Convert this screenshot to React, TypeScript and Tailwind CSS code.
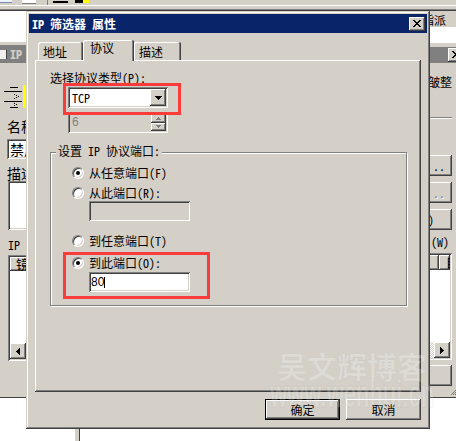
import React from "react";

const raised =
  "shadow-[inset_-1px_-1px_#404040,inset_1px_1px_#ffffff,inset_-2px_-2px_#808080,inset_2px_2px_#d4d0c8]";
const sunken =
  "shadow-[inset_1px_1px_#808080,inset_-1px_-1px_#ffffff,inset_2px_2px_#404040,inset_-2px_-2px_#d4d0c8]";
const frame =
  "shadow-[inset_-1px_-1px_#404040,inset_1px_1px_#d4d0c8,inset_-2px_-2px_#808080,inset_2px_2px_#ffffff]";
const tabEdge = "shadow-[inset_-1px_0_#404040,inset_1px_1px_#ffffff,inset_-2px_0_#808080]";

function CloseX() {
  return (
    <svg width="8" height="7" viewBox="0 0 8 7" shapeRendering="crispEdges" className="block">
      <path
        d="M0 0h2v1H0zM6 0h2v1H6zM1 1h2v1H1zM5 1h2v1H5zM2 2h4v1H2zM3 3h2v1H3zM2 4h4v1H2zM1 5h2v1H1zM5 5h2v1H5zM0 6h2v1H0zM6 6h2v1H6z"
        fill="#000"
      />
    </svg>
  );
}

function ArrowDown({ color = "#000" }: { color?: string }) {
  return (
    <svg width="7" height="4" viewBox="0 0 7 4" shapeRendering="crispEdges" className="block">
      <path d="M0 0h7v1H0zM1 1h5v1H1zM2 2h3v1H2zM3 3h1v1H3z" fill={color} />
    </svg>
  );
}

function SmallArrow({ up }: { up?: boolean }) {
  return (
    <svg width="5" height="3" viewBox="0 0 5 3" shapeRendering="crispEdges" className="block">
      {up ? (
        <path d="M2 0h1v1H2zM1 1h3v1H1zM0 2h5v1H0z" fill="#808080" />
      ) : (
        <path d="M0 0h5v1H0zM1 1h3v1H1zM2 2h1v1H2z" fill="#808080" />
      )}
    </svg>
  );
}

function ArrowLeft() {
  return (
    <svg width="4" height="7" viewBox="0 0 4 7" shapeRendering="crispEdges" className="block">
      <path d="M0 3h1v1H0zM1 2h1v3H1zM2 1h1v5H2zM3 0h1v7H3z" fill="#000" />
    </svg>
  );
}

function ArrowRight() {
  return (
    <svg width="4" height="7" viewBox="0 0 4 7" shapeRendering="crispEdges" className="block">
      <path d="M0 0h1v7H0zM1 1h1v5H1zM2 2h1v3H2zM3 3h1v1H3z" fill="#000" />
    </svg>
  );
}

function Radio({ checked, label, className = "" }: { checked?: boolean; label: string; className?: string }) {
  return (
    <div className={`flex items-center h-[12px] ${className}`}>
      <span className="w-[12px] h-[12px] shrink-0 rounded-full bg-white border border-t-[#808080] border-l-[#808080] border-r-white border-b-white shadow-[inset_1px_1px_0_#404040,inset_-1px_-1px_0_#d4d0c8] flex items-center justify-center">
        {checked && <span className="w-[4px] h-[4px] rounded-full bg-black" />}
      </span>
      <span className="ml-[5px] leading-[12px] whitespace-nowrap">{label}</span>
    </div>
  );
}

function TopStrip() {
  return (
    <div className="h-[11px] flex flex-col bg-[#d4d0c8]">
      <div className="h-[5px] flex items-start">
        <span className="w-[12px] h-[3px] bg-[#eef2fa] border-b border-[#7a8aa8]" />
        <span className="ml-[10px] w-[14px] h-[4px] bg-white border-b border-[#808080]" />
        <span className="ml-[11px] w-px h-[5px] bg-[#808080]" />
        <span className="ml-[5px] mt-[1px] w-[15px] h-[2px] bg-black" />
        <span className="ml-[7px] w-[8px] h-[3px] bg-black" />
        <span className="w-[6px] h-[3px] bg-[#ffff00]" />
      </div>
      <div className="h-px bg-white" />
      <div className="h-[3px]" />
      <div className="h-px bg-[#808080]" />
      <div className="h-px bg-[#404040]" />
    </div>
  );
}

function LeftWindow() {
  return (
    <div className="w-[26px] flex flex-col overflow-hidden">
      <div className="h-[31px] bg-white" />
      <div className="h-[3px] bg-[#d4d0c8]" />
      <div className="h-[18px] bg-[#808080] flex items-center">
        <span className="w-[7px] h-[9px] bg-[#f0f0f0] border-r border-[#404040]" />
        <span className="ml-[3px] font-bold text-[#d4d0c8] leading-[12px]">IP</span>
      </div>
      <div className="h-[334px] bg-[#d4d0c8] flex flex-col items-start">
        <div className="mt-[22px] flex h-[23px]">
          <svg width="19" height="23" viewBox="0 0 19 23" shapeRendering="crispEdges" className="ml-[4px] block">
            <path
              d="M6 2h8v1H6zM0 6h18v1H0zM10 9h1v1h-1zM12 10h1v1h-1zM14 11h1v1h-1zM12 12h1v1h-1zM10 13h1v1h-1zM0 16h18v1H0zM10 18h1v1h-1zM12 19h1v1h-1zM10 20h1v1h-1zM6 22h8v1H6z"
              fill="#000"
            />
          </svg>
          <span className="w-[3px] h-[23px] bg-[#ffff00]" />
        </div>
        <div className="mt-[11px] ml-[7px] text-[14px] leading-[14px] whitespace-nowrap">名称</div>
        <div className={`mt-[6px] ml-[7px] w-[40px] h-[20px] shrink-0 bg-white ${sunken} pl-[3px] text-[14px] leading-[20px] whitespace-nowrap`}>
          禁用
        </div>
        <div className="mt-[7px] ml-[7px] text-[14px] leading-[14px] whitespace-nowrap">描述</div>
        <div className={`mt-[1px] ml-[8px] w-[40px] h-[49px] shrink-0 bg-white ${sunken}`} />
        <div className="mt-[9px] ml-[8px] leading-[12px]">IP</div>
        <div className={`mt-[4px] ml-[8px] w-[40px] h-[106px] shrink-0 bg-white ${sunken} p-[2px] flex flex-col`}>
          <div className={`h-[14px] bg-[#d4d0c8] ${raised} pl-[6px] text-[13px] leading-[14px] whitespace-nowrap`}>镜像</div>
          <div className="flex-1" />
          <div className="h-[16px] flex">
            <span className={`w-[16px] h-[16px] bg-[#d4d0c8] ${raised} flex items-center justify-center`}>
              <ArrowLeft />
            </span>
          </div>
        </div>
      </div>
      <div className="h-px bg-[#404040]" />
      <div className="flex-1 bg-white" />
    </div>
  );
}

function RightWindow() {
  return (
    <div className="w-[26px] flex flex-col overflow-hidden">
      <div className="h-[16px] bg-[#d4d0c8] pt-[3px] -ml-[8px] leading-[12px] whitespace-nowrap">指派</div>
      <div className="h-[16px] bg-white" />
      <div className="h-[4px] bg-[#d4d0c8]" />
      <div className="h-[16px] bg-[#808080] flex items-start">
        <span className={`ml-[18px] mt-[1px] w-[16px] h-[14px] shrink-0 bg-[#d4d0c8] ${raised} pl-[4px] pt-[3px]`}>
          <CloseX />
        </span>
      </div>
      <div className="h-[334px] bg-[#d4d0c8] flex flex-col items-start">
        <div className="mt-[13px] -ml-[2px] leading-[12px] whitespace-nowrap">皱整</div>
        <div className="mt-[29px] w-[22px] h-[2px] border-t border-[#808080] border-b border-b-white" />
        <div className={`mt-[36px] -ml-[10px] w-[32px] h-[21px] shrink-0 bg-[#d4d0c8] ${raised} flex items-center justify-end pr-[7px] leading-[12px]`}>
          ..
        </div>
        <div className={`mt-[6px] -ml-[10px] w-[32px] h-[21px] shrink-0 bg-[#d4d0c8] ${raised} flex items-center justify-end pr-[7px] leading-[12px] text-[#808080] [text-shadow:1px_1px_0_#ffffff]`}>
          ..
        </div>
        <div className={`mt-[6px] -ml-[10px] w-[32px] h-[21px] shrink-0 bg-[#d4d0c8] ${raised} flex items-center pl-[8px] leading-[12px]`}>
          )
        </div>
        <div className="mt-[6px] pl-[1px] leading-[12px] whitespace-nowrap">(W)</div>
        <div className={`mt-[5px] -ml-[10px] w-[32px] h-[107px] shrink-0 bg-white ${sunken} p-[2px] flex flex-col`}>
          <div className="h-[15px] flex">
            <span className={`w-[17px] h-[15px] bg-[#d4d0c8] ${raised}`} />
            <span className={`flex-1 h-[15px] bg-[#d4d0c8] ${raised} pl-[7px] leading-[15px] whitespace-nowrap overflow-hidden`}>
              目的
            </span>
          </div>
          <div className="flex-1" />
          <div className="h-[16px] flex">
            <span className="flex-1 bg-[image:repeating-conic-gradient(#d4d0c8_0_25%,#ffffff_0_50%)] bg-[length:2px_2px]" />
            <span className={`w-[16px] h-[16px] bg-[#d4d0c8] ${raised} flex items-center justify-center`}>
              <ArrowRight />
            </span>
          </div>
        </div>
        <div className={`mt-[5px] -ml-[10px] w-[32px] h-[21px] shrink-0 bg-[#d4d0c8] ${raised}`} />
        <svg width="5" height="6" viewBox="0 0 5 6" shapeRendering="crispEdges" className="mt-auto mb-[1px] self-end block">
          <path d="M4 0h1v1H4zM3 1h1v1H3zM2 2h1v1H2zM4 2h1v1H4zM1 3h1v1H1zM3 3h1v1H3zM0 4h1v1H0zM2 4h1v1H2zM4 4h1v1H4z" fill="#808080" />
        </svg>
      </div>
      <div className="h-px bg-[#404040]" />
      <div className="flex-1 bg-white" />
    </div>
  );
}

function Dialog() {
  return (
    <div className={`absolute left-[26px] top-[11px] w-[404px] h-[418px] bg-[#d4d0c8] p-[3px] flex flex-col ${frame}`}>
      <div className="h-[19px] shrink-0 bg-[#0a246a] flex items-center justify-between pl-[3px] pr-[2px]">
        <span className="text-white font-bold leading-[12px] whitespace-nowrap">IP 筛选器 属性</span>
        <span className={`w-[16px] h-[14px] bg-[#d4d0c8] ${raised} pl-[4px] pt-[3px]`}>
          <CloseX />
        </span>
      </div>
      <div className="flex flex-col px-[6px] pt-[7px]">
        <div className="flex items-end h-[20px] pl-[3px]">
          <div className={`w-[45px] h-[18px] rounded-t-[2px] pl-[5px] pt-[4px] leading-[12px] ${tabEdge}`}>地址</div>
          <div className={`relative z-10 w-[51px] h-[21px] -mb-px rounded-t-[2px] bg-[#d4d0c8] pl-[7px] pt-[2px] leading-[12px] ${tabEdge}`}>
            协议
          </div>
          <div className={`w-[47px] h-[18px] rounded-t-[2px] pl-[5px] pt-[4px] leading-[12px] ${tabEdge}`}>描述</div>
        </div>
        <div className={`h-[332px] ${raised} pt-[12px] pl-[15px] flex flex-col items-start`}>
          <div className="leading-[12px] whitespace-nowrap">选择协议类型(P):</div>
          <div className={`ml-[18px] mt-[3px] w-[100px] h-[21px] bg-white ${sunken} flex items-center p-[2px]`}>
            <span className="flex-1 pl-[2px] leading-[12px]">TCP</span>
            <span className={`w-[16px] h-[17px] bg-[#d4d0c8] ${raised} flex items-center justify-center`}>
              <ArrowDown />
            </span>
          </div>
          <div className={`ml-[18px] mt-[4px] w-[100px] h-[21px] bg-[#d4d0c8] ${sunken} flex p-[2px]`}>
            <span className="flex-1 pl-[2px] text-[#808080] font-['Liberation_Sans',sans-serif] text-[12px] leading-[17px]">6</span>
            <div className="flex flex-col w-[15px]">
              <span className={`flex-1 bg-[#d4d0c8] ${raised} flex items-center justify-center`}>
                <SmallArrow up />
              </span>
              <span className={`flex-1 bg-[#d4d0c8] ${raised} flex items-center justify-center`}>
                <SmallArrow />
              </span>
            </div>
          </div>
          <div className="relative mt-[19px] w-[357px] h-[154px] border border-[#808080] shadow-[inset_1px_1px_0_#ffffff,1px_1px_0_#ffffff] pt-[14px] pl-[21px] flex flex-col items-start">
            <span className="absolute left-[5px] -top-[8px] px-[2px] bg-[#d4d0c8] leading-[12px] whitespace-nowrap">
              设置 IP 协议端口:
            </span>
            <Radio checked label="从任意端口(F)" />
            <Radio label="从此端口(R):" className="mt-[8px]" />
            <div className={`ml-[17px] mt-[2px] w-[101px] h-[20px] bg-[#d4d0c8] ${sunken}`} />
            <Radio label="到任意端口(T)" className="mt-[14px]" />
            <Radio checked label="到此端口(O):" className="mt-[10px]" />
            <div className={`ml-[17px] mt-[3px] w-[101px] h-[20px] bg-white ${sunken} flex items-center pl-[2px] font-['Liberation_Sans',sans-serif] text-[12px]`}>
              <span className="leading-[12px]">80</span>
              <span className="w-px h-[11px] bg-black" />
            </div>
          </div>
        </div>
        <div className="flex justify-end gap-[6px] mt-[7px]">
          <div className={`w-[75px] h-[21px] border border-black bg-[#d4d0c8] ${raised} flex items-center justify-center leading-[12px]`}>
            确定
          </div>
          <div className={`w-[75px] h-[21px] bg-[#d4d0c8] ${raised} flex items-center justify-center leading-[12px]`}>
            取消
          </div>
        </div>
      </div>
    </div>
  );
}

export default function App() {
  return (
    <div className="relative w-[456px] h-[441px] overflow-hidden bg-white text-black text-[12px] leading-[12px] font-['Noto_Sans_Mono_CJK_SC','Noto_Sans_CJK_SC',sans-serif]">
      <div className="flex flex-col h-full">
        <TopStrip />
        <div className="flex flex-1">
          <LeftWindow />
          <div className="w-[404px] flex flex-col">
            <div className="h-[418px] bg-[#d4d0c8]" />
            <div className="flex-1 bg-white">
              <div className="ml-[48px] w-[6px] h-full bg-[#d4d0c8] border-l border-white border-r border-r-[#404040]" />
            </div>
          </div>
          <RightWindow />
        </div>
      </div>
      <Dialog />
      <div className="absolute left-[63px] top-[83px] w-[118px] h-[32px] border-[3px] border-[#f93b3b] pointer-events-none" />
      <div className="absolute left-[63px] top-[252px] w-[147px] h-[47px] border-[3px] border-[#f93b3b] pointer-events-none" />
      <div className="absolute left-[277px] top-[350px] text-[30px] leading-[30px] font-bold text-white/25 whitespace-nowrap pointer-events-none [-webkit-text-stroke:1px_rgba(150,150,150,0.1)]">
        吴文辉博客
      </div>
      <div className="absolute left-[270px] top-[375px] origin-top scale-y-[1.75] text-[22px] leading-[22px] font-bold font-['Liberation_Sans',sans-serif] text-white/20 whitespace-nowrap pointer-events-none [-webkit-text-stroke:1px_rgba(150,150,150,0.1)]">
        www.wenhui.cn
      </div>
    </div>
  );
}
